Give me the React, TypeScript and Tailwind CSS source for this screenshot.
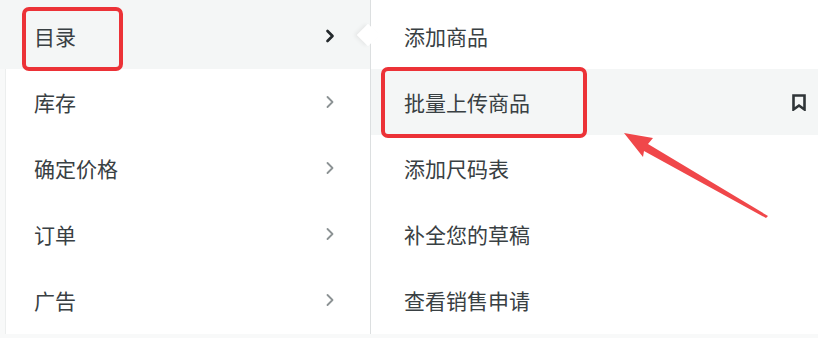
import { ChevronRight } from 'lucide-react';

const mainItems = ['目录', '库存', '确定价格', '订单', '广告'];
const subItems = ['添加商品', '批量上传商品', '添加尺码表', '补全您的草稿', '查看销售申请'];

const font = { fontFamily: '"Noto Sans CJK SC", "Noto Sans", sans-serif' };

function BookmarkIcon() {
  return (
    <svg width="14" height="17" viewBox="0 0 14 17" fill="none">
      <path d="M1.5 1.5h11v14l-5.5-4-5.5 4z" stroke="#2f3538" strokeWidth="2.6" strokeLinejoin="miter" />
    </svg>
  );
}

export default function App() {
  return (
    <div className="relative w-[818px] h-[338px] bg-[#f8f9f9] overflow-hidden flex" style={font}>
      {/* main menu */}
      <div className="relative w-[365px] ml-[5px] h-[334px] pt-[3px] bg-white border-l border-[#eceeee] flex flex-col">
        {mainItems.map((item, i) => (
          <div
            key={item}
            className={`h-[66px] flex items-center justify-between pl-[28px] pr-[30px] text-[21px] leading-none text-[#394043] ${
              i === 0 ? 'bg-[#f4f6f6] -ml-[6px] -mt-[3px] pt-[3px] h-[69px] pl-[34px]' : ''
            }`}
          >
            <span>{item}</span>
            <ChevronRight
              size={20}
              strokeWidth={i === 0 ? 3.2 : 2.2}
              className={i === 0 ? 'text-[#23292c]' : 'text-[#8c9294]'}
            />
          </div>
        ))}
        {/* caret of submenu */}
        <div className="absolute right-[-6px] top-[27px] w-[16px] h-[16px] rotate-45 bg-white shadow-[-2px_2px_4px_rgba(0,0,0,0.06)]" />
      </div>

      {/* submenu */}
      <div className="w-[448px] h-[334px] pt-[3px] bg-white border-l border-[#dcdfe0] flex flex-col">
        {subItems.map((item, i) => (
          <div
            key={item}
            className={`h-[66px] flex items-center justify-between pl-[33px] pr-[12px] text-[21px] leading-none text-[#394043] ${
              i === 1 ? 'bg-[#f4f6f6]' : ''
            }`}
          >
            <span>{item}</span>
            {i === 1 && <BookmarkIcon />}
          </div>
        ))}
      </div>

      {/* annotation boxes */}
      <div className="absolute left-[22px] top-[7px] w-[101px] h-[64px] border-[4px] border-[#ec3237] rounded-[7px]" />
      <div className="absolute left-[381px] top-[67px] w-[206px] h-[71px] border-[4px] border-[#ec3237] rounded-[7px]" />

      {/* annotation arrow */}
      <svg className="absolute left-0 top-0" width="818" height="338" viewBox="0 0 818 338">
        <polygon points="624,133 653,138 648,144 768,216 766,218 644,151 643,157" fill="#f0474a" />
      </svg>
    </div>
  );
}
